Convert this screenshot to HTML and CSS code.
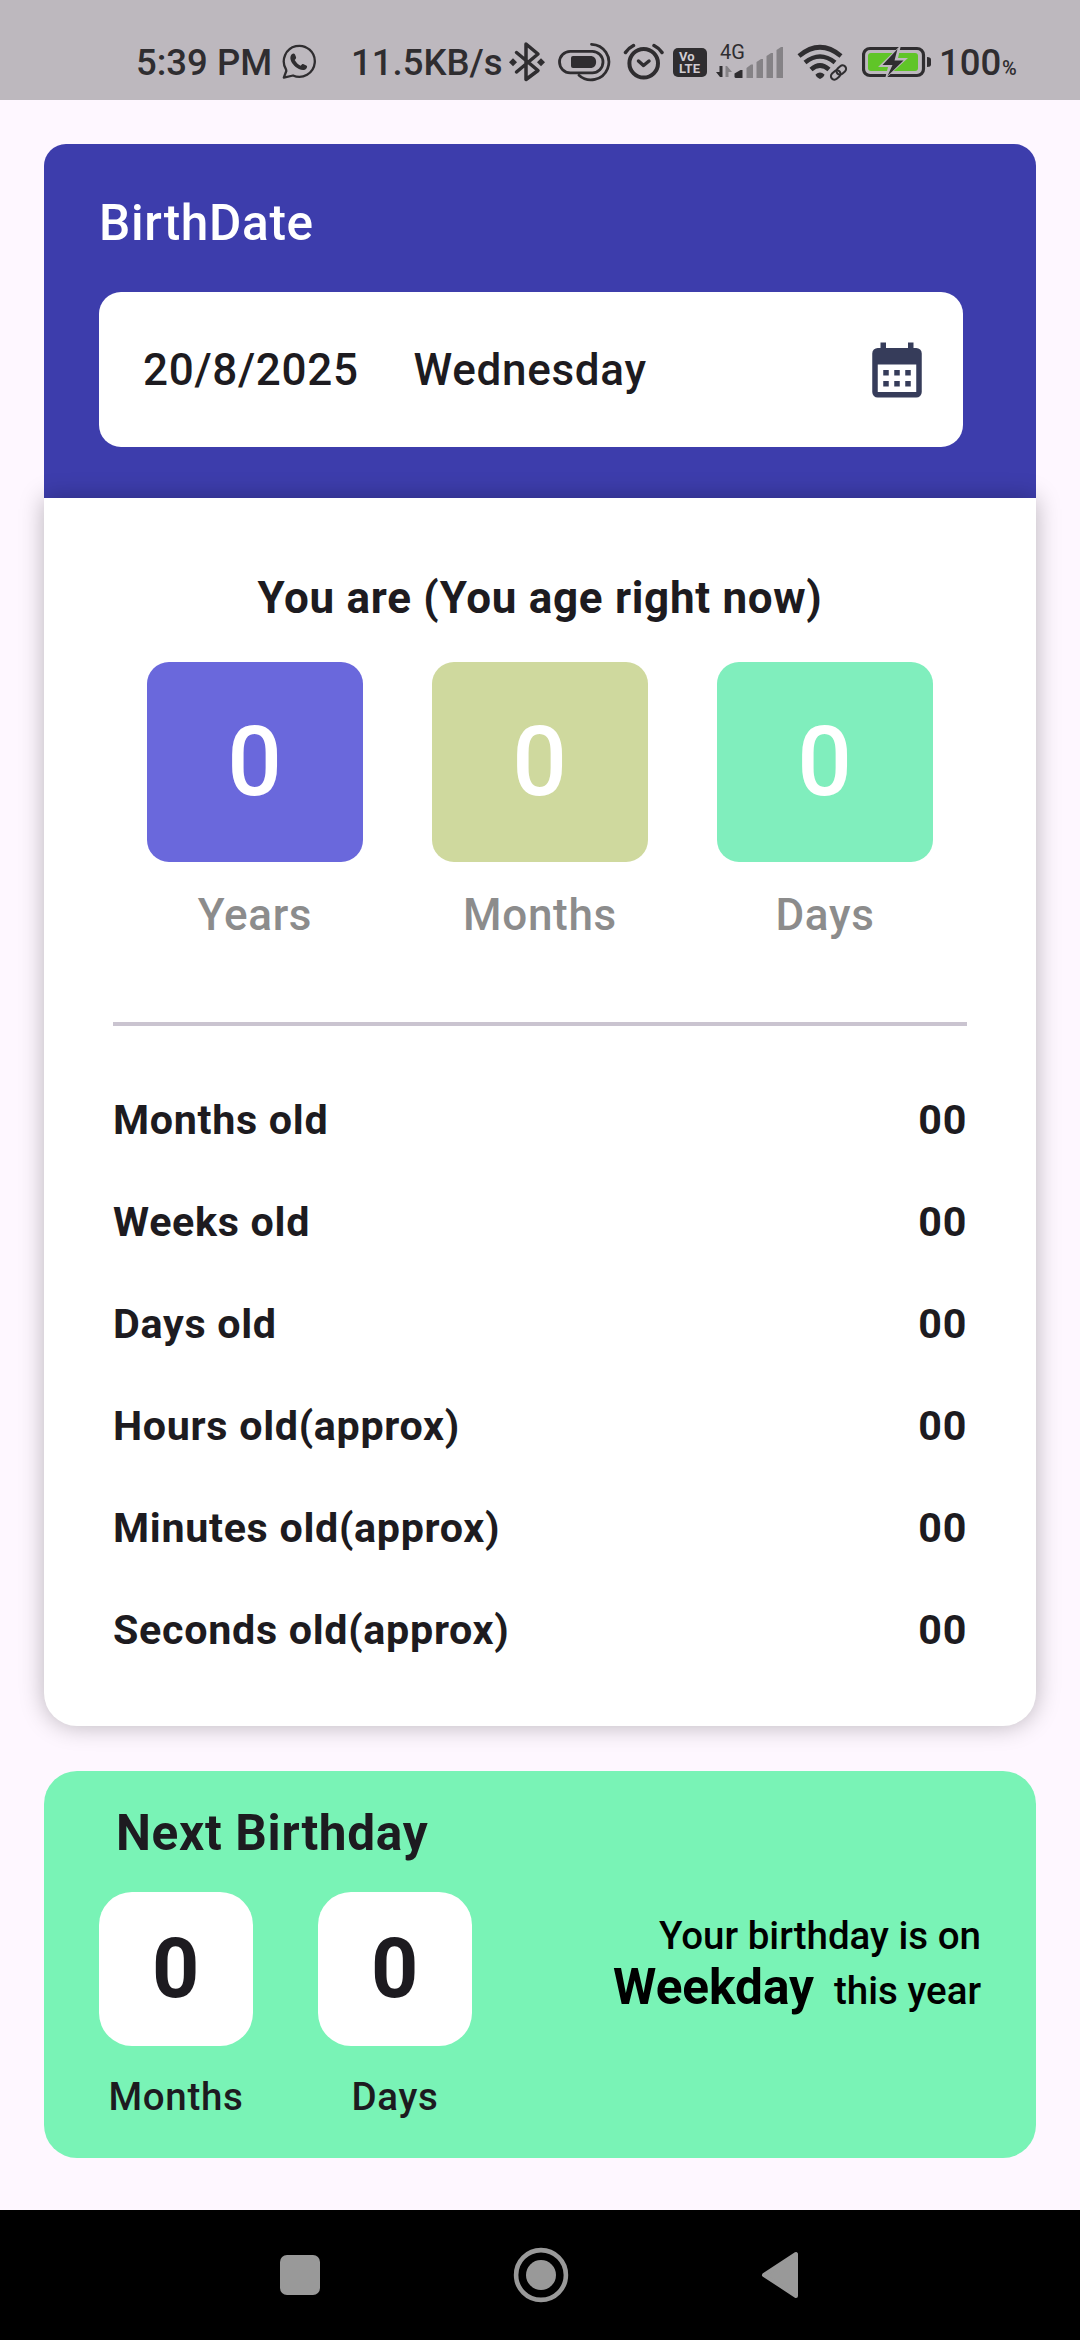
FILE: index.html
```html
<!DOCTYPE html>
<html lang="en">
<head>
<meta charset="utf-8">
<title>Age Calculator</title>
<link rel="stylesheet" href="styles.css">
</head>
<body>
<header class="status">
  <span class="clock">5:39 PM</span>
  <svg class="whatsapp" width="36" height="36" viewBox="281 44 36 36">
    <path d="M286 69.300A15.500 15.500 0 1 1 293 75.500L283.800 77.600L286.300 71Z" fill="none" stroke="#2f2d30" stroke-width="2.300" stroke-linejoin="round"/>
    <path d="M291.800 54.200c1.300-1.200 2.600-1 3.200.4l1 2.500c.4 1.200-.2 1.900-1.300 3 1.500 2.700 3.400 4.500 6 5.700 1.200-1.500 1.700-2.100 2.900-1.600l2.700 1.400c1.100.6 1 1.800.1 2.900-1.700 2-4.400 1.900-7.500.4-4.500-2.200-8.200-6.500-8.500-10.400-.1-1.800.4-3.300 1.400-4.300z" fill="#2f2d30"/>
  </svg>
  <span class="speed">11.5KB/s</span>
  <svg class="bluetooth" width="37" height="40" viewBox="509 42 37 40">
    <path d="M516.500 52.500L538 70.500L526 79.500V44L538 54L516.500 72" fill="none" stroke="#2f2d30" stroke-width="3.500" stroke-linejoin="round" stroke-linecap="round"/>
    <path d="M509 62.300l4-4 4 4-4 4zM537 62.300l4-4 4 4-4 4z" fill="#2f2d30"/>
  </svg>
  <svg class="pill" width="54" height="40" viewBox="558 42 54 40">
    <rect x="559.500" y="51.300" width="43.500" height="21.500" rx="10.700" fill="none" stroke="#2f2d30" stroke-width="2.800"/>
    <path d="M573 56h18.500a6.200 6.200 0 0 1 0 12H573a2 2 0 0 1-2-2v-8a2 2 0 0 1 2-2z" fill="#2f2d30"/>
    <path d="M591.500 44.300A17.800 17.800 0 1 1 579 75.200" fill="none" stroke="#2f2d30" stroke-width="2.800" stroke-linecap="round"/>
  </svg>
  <svg class="alarm" width="41" height="40" viewBox="623 42 41 40">
    <circle cx="643.700" cy="63.300" r="14.300" fill="none" stroke="#2f2d30" stroke-width="4"/>
    <path d="M638.500 61l5 4.500 5.500-4.500" fill="none" stroke="#2f2d30" stroke-width="3.500" stroke-linecap="round" stroke-linejoin="round"/>
    <path d="M625.500 52.500q3-4.500 8-7M654 45.500q5 2.500 8 7" fill="none" stroke="#2f2d30" stroke-width="3.500" stroke-linecap="round"/>
  </svg>
  <div class="volte"><span>Vo</span><span>LTE</span></div>
  <div class="cell">
    <span class="net">4G</span>
    <svg width="68" height="33" viewBox="716 46 68 33">
      <path d="M722.500 66v11h-2.500l-4-5h3.500V66z" fill="#2f2d30"/>
      <path d="M725.500 77V66h1.500l5 6h-3.500v5z" fill="#858286"/>
      <path d="M736 78a1.500 1.500 0 0 1-1.500-1.500V73.500l6-3.500h2v8z" fill="#2f2d30"/>
      <path d="M746.500 78V68l4.500-3.500h2V78zM756.500 78V62l4.500-3h2V78zM766.500 78V56l4.500-3h2V78zM776.500 78V50l4.500-3h2V78z" fill="#858286"/>
    </svg>
  </div>
  <svg class="wifi" width="51" height="37" viewBox="797 44 51 37">
    <path d="M799 56Q820 38.500 841 56M805 62.500Q820 50.500 835 62.500M811 69.500Q820 61.500 829 69.500" fill="none" stroke="#2f2d30" stroke-width="4.600"/>
    <path d="M815.500 74.500q4.500-4 9 0q-.5 2.500-4.500 4.500q-4-2-4.500-4.500z" fill="#2f2d30"/>
    <g transform="rotate(-42 838.500 72.500)" fill="none" stroke="#bdb8be" stroke-width="5">
      <rect x="829.500" y="69" width="10.500" height="7" rx="3.500"/><rect x="837" y="69" width="10.500" height="7" rx="3.500"/>
      <g stroke="#2f2d30" stroke-width="2"><rect x="829.500" y="69" width="10.500" height="7" rx="3.500"/><rect x="837" y="69" width="10.500" height="7" rx="3.500"/></g>
    </g>
  </svg>
  <svg class="battery" width="70" height="32" viewBox="862 46 70 32">
    <rect x="863.500" y="48.500" width="60" height="27" rx="6.500" fill="none" stroke="#2f2d30" stroke-width="3.200"/>
    <rect x="868" y="53" width="50" height="18" rx="3" fill="#60c528"/>
    <path d="M927 57q4 0 4 2.500v5q0 2.500-4 2.500z" fill="#2f2d30"/>
    <path d="M901 45L878 67H888L885 79L908 58H898Z" fill="#bdb8be"/>
    <path d="M897.500 49L882.500 65H892.500L887.500 76L903.500 60.500H894.500Z" fill="#2f2d30"/>
  </svg>
  <span class="level">100</span><span class="percent">%</span>
</header>

<main class="page">
  <section class="birth">
    <h1 class="birth-title">BirthDate</h1>
    <div class="field">
      <span class="date">20/8/2025</span>
      <span class="day">Wednesday</span>
      <svg class="calendar" width="66" height="66" viewBox="0 0 24 24" fill="#363c5a">
        <path fill-rule="evenodd" d="M19 4h-1V2h-2v2H8V2H6v2H5a2 2 0 0 0-2 2v14a2 2 0 0 0 2 2h14a2 2 0 0 0 2-2V6a2 2 0 0 0-2-2zM19 20H5V10h14zM7 12h2v2H7zM11 12h2v2h-2zM15 12h2v2h-2zM7 16h2v2H7zM11 16h2v2h-2zM15 16h2v2h-2z"/>
      </svg>
    </div>
  </section>

  <section class="age">
    <h2 class="age-title">You are (You age right now)</h2>
    <div class="tiles">
      <div class="tile"><div class="tile-box years">0</div><div class="tile-label">Years</div></div>
      <div class="tile"><div class="tile-box months">0</div><div class="tile-label">Months</div></div>
      <div class="tile"><div class="tile-box days">0</div><div class="tile-label">Days</div></div>
    </div>
    <hr class="rule">
    <div class="row"><span>Months old</span><span>00</span></div>
    <div class="row"><span>Weeks old</span><span>00</span></div>
    <div class="row"><span>Days old</span><span>00</span></div>
    <div class="row"><span>Hours old(approx)</span><span>00</span></div>
    <div class="row"><span>Minutes old(approx)</span><span>00</span></div>
    <div class="row"><span>Seconds old(approx)</span><span>00</span></div>
  </section>

  <section class="next">
    <h2 class="next-title">Next Birthday</h2>
    <div class="next-body">
      <div class="count"><div class="count-box">0</div><div class="count-label">Months</div></div>
      <div class="count"><div class="count-box">0</div><div class="count-label">Days</div></div>
      <div class="note">
        <div class="note-top">Your birthday is on</div>
        <div class="note-bottom"><strong>Weekday</strong><span>this year</span></div>
      </div>
    </div>
  </section>
</main>

<nav class="navbar">
  <svg width="40" height="40" viewBox="0 0 40 40"><rect width="40" height="40" rx="7" fill="#999"/></svg>
  <svg width="56" height="56" viewBox="0 0 56 56"><circle cx="28" cy="28" r="24.900" fill="none" stroke="#999" stroke-width="4.600"/><circle cx="28" cy="28" r="15" fill="#999"/></svg>
  <svg width="38" height="48" viewBox="0 0 38 48"><path d="M3 24L35 3V45Z" fill="#999" stroke="#999" stroke-width="4" stroke-linejoin="round"/></svg>
</nav>
</body>
</html>
```
FILE: styles.css
```css
* { box-sizing: border-box; }
body {
  margin: 0;
  width: 1080px;
  height: 2340px;
  display: flex;
  flex-direction: column;
  background: #fef7ff;
  color: #1d1b20;
  font-family: Roboto, sans-serif;
  letter-spacing: 0.6875px;
  overflow: hidden;
}
h1, h2 { margin: 0; font-size: inherit; font-weight: inherit; }
svg { display: block; flex: none; }

.status {
  height: 100px;
  flex: none;
  display: flex;
  align-items: flex-start;
  background: #bdb8be;
  color: #2f2d30;
  letter-spacing: 0;
  font-size: 36.5px;
  font-weight: 500;
  line-height: 44px;
  white-space: nowrap;
}
.clock { width: 145px; margin: 41px 0 0 136px; }
.whatsapp { margin-top: 44px; }
.speed { width: 158px; margin: 41px 0 0 34px; }
.bluetooth { margin-top: 42px; }
.pill { margin: 42px 0 0 12px; }
.alarm { margin: 42px 0 0 11px; }
.volte {
  width: 34px;
  height: 29px;
  margin: 48px 0 0 9px;
  padding: 3px 0 0 6px;
  border-radius: 5px;
  background: #2f2d30;
  color: #d0ccd1;
  font-size: 13px;
  font-weight: 700;
  line-height: 12px;
  display: flex;
  flex-direction: column;
}
.cell { display: grid; margin: 46px 0 0 9px; }
.cell > * { grid-area: 1 / 1; }
.net { padding-left: 4px; font-size: 20px; font-weight: 400; line-height: 13px; }
.wifi { margin: 44px 0 0 13px; }
.battery { margin: 46px 0 0 14px; }
.level { width: 62px; margin: 41px 0 0 7px; }
.percent { margin: 51px 0 0 1px; font-size: 20px; line-height: 34px; }

.page { flex: 1; display: flex; flex-direction: column; padding: 44px 44px 0; }

.birth {
  height: 354px;
  padding: 50px 73px 0 55px;
  border-radius: 22px 22px 0 0;
  background: #3d3dac;
}
.birth-title { color: #fff; font-size: 49.5px; font-weight: 500; line-height: 58px; }
.field {
  height: 155px;
  margin-top: 40px;
  padding: 0 33px 0 44px;
  display: flex;
  align-items: center;
  border-radius: 22px;
  background: #fff;
  font-size: 44px;
  font-weight: 500;
}
.day { margin-left: 55px; }
.calendar { margin-left: auto; }

.age {
  position: relative;
  height: 1228px;
  padding: 74px 69px 0;
  border-radius: 0 0 33px 33px;
  background: #fff;
  box-shadow: 0 0 24px rgba(0, 0, 0, 0.28);
}
.age-title { text-align: center; font-size: 44px; font-weight: 700; line-height: 52px; }
.tiles { display: flex; justify-content: space-between; margin-top: 38px; padding: 0 34px; }
.tile { width: 216px; text-align: center; }
.tile-box {
  height: 200px;
  border-radius: 22px;
  color: #fff;
  font-size: 96.25px;
  font-weight: 500;
  line-height: 200px;
}
.years { background: #6a68dc; }
.months { background: #cfd99e; }
.days { background: #80eebd; }
.tile-label { margin-top: 27px; color: #8c8c8c; font-size: 44px; font-weight: 500; line-height: 52px; }
.rule { height: 4px; margin: 81px 0 43px; border: 0; background: #cac4d0; }
.row {
  height: 102px;
  display: flex;
  justify-content: space-between;
  font-size: 41.25px;
  font-weight: 700;
  line-height: 103px;
}

.next {
  height: 387px;
  margin-top: 45px;
  padding: 33px 55px 0;
  border-radius: 33px;
  background: #79f3b6;
}
.next-title { padding-left: 17px; font-size: 49.5px; font-weight: 700; line-height: 58px; }
.next-body { display: flex; margin-top: 30px; }
.count { width: 154px; margin-right: 65px; text-align: center; }
.count-box {
  height: 154px;
  border-radius: 33px;
  background: #fff;
  font-size: 82.5px;
  font-weight: 700;
  line-height: 154px;
}
.count-label { margin-top: 28px; font-size: 38.5px; font-weight: 500; line-height: 46px; }
.note {
  margin: 21px 0 0 auto;
  color: #000;
  font-size: 38.5px;
  font-weight: 500;
  letter-spacing: 0;
  text-align: right;
  white-space: nowrap;
}
.note-top { line-height: 46px; }
.note-bottom { display: flex; justify-content: flex-end; align-items: baseline; gap: 20px; margin-top: -1px; line-height: 58px; }
.note-bottom strong { font-size: 49.5px; font-weight: 700; }

.navbar {
  height: 130px;
  flex: none;
  display: flex;
  align-items: center;
  justify-content: space-between;
  padding: 0 281px 0 280px;
  background: #000;
}
```
